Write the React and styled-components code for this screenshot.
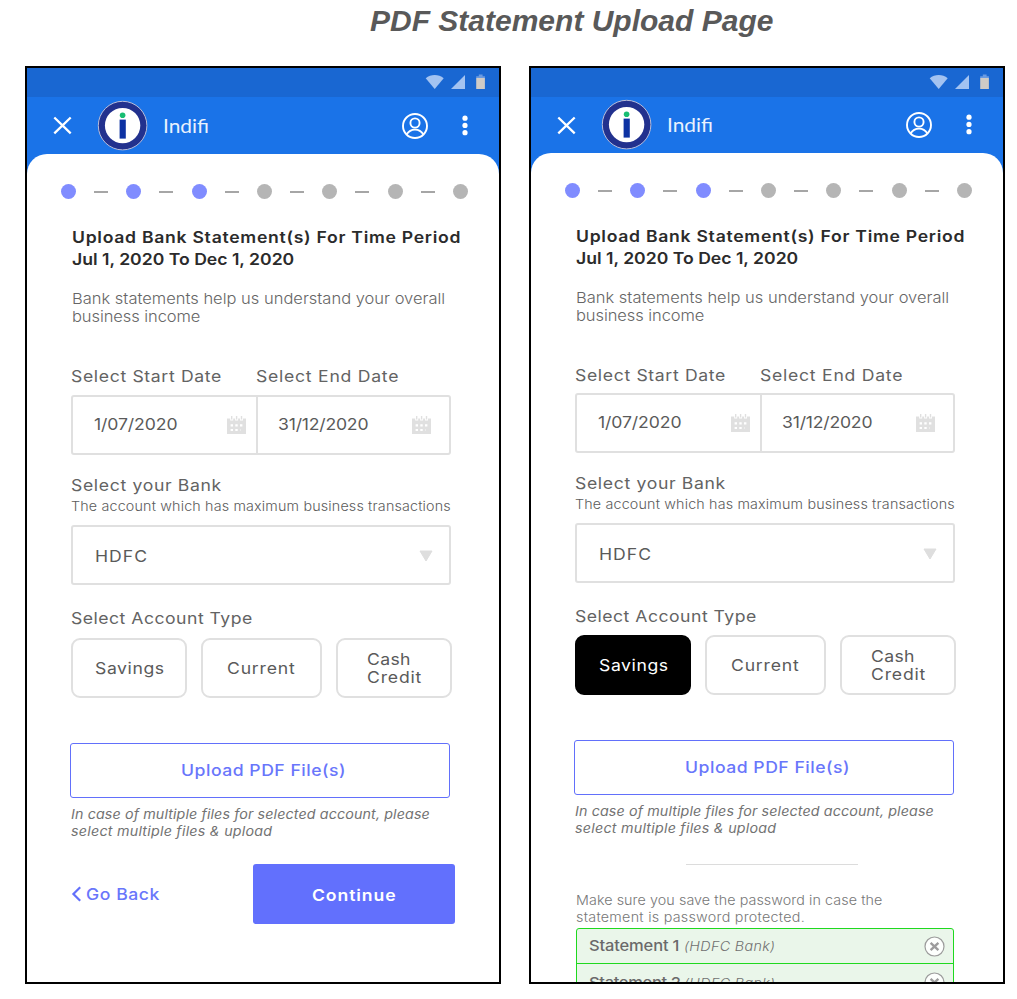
import React from 'react';
import styled, { createGlobalStyle } from 'styled-components';

const GlobalStyle = createGlobalStyle`
  * { box-sizing: border-box; }
  body { margin: 0; background: #fff; font-family: Inter, sans-serif; }
`;

const Page = styled.main`
  width: 1017px;
  height: 999px;
  overflow: hidden;
`;

const Title = styled.h1`
  margin: 0;
  padding: 4px 0 0 370px;
  height: 66px;
  font: italic bold 30px/34px "Liberation Sans", Arial, sans-serif;
  color: #595959;
`;

const Screens = styled.div`
  display: flex;
  gap: 28px;
  padding-left: 25px;
`;

const Phone = styled.section`
  display: flex;
  flex-direction: column;
  width: 476px;
  height: 918px;
  border: 2px solid #000;
  background: #1a73e8;
  overflow: hidden;
`;

const StatusBar = styled.div`
  display: flex;
  justify-content: flex-end;
  flex: none;
  height: 29px;
  padding: 6px 14px 0 0;
  background: #1967d2;
`;

const AppBar = styled.header`
  display: flex;
  align-items: center;
  flex: none;
  height: ${(p) => p.$height}px;
  padding: 0 31px 0 26px;
`;

const Logo = styled.svg`
  margin-left: 25px;
  flex: none;
`;

const Brand = styled.span`
  flex: 1;
  padding-left: 14px;
  font: 19px/24px Lato, sans-serif;
  color: #e9f1fd;
  transform: scaleX(1.1);
  transform-origin: 14px 50%;
`;

const Kebab = styled.svg`
  margin-left: 33px;
`;

const Sheet = styled.div`
  flex: 1;
  min-height: 0;
  padding: 30px 31px 0 34px;
  background: #fff;
  border-radius: 20px 20px 0 0;
`;

const Steps = styled.div`
  display: flex;
  justify-content: space-between;
  align-items: center;
  height: 15px;
`;

const Dot = styled.i`
  width: 15px;
  height: 15px;
  border-radius: 50%;
  background: ${(p) => (p.$done ? '#808cff' : '#b5b5b5')};
`;

const Dash = styled.i`
  width: 14px;
  height: 2px;
  background: #a6a6a6;
`;

const Form = styled.div`
  width: 381px;
  margin-left: 10px;
`;

/* Extended setting of the typeface: glyphs are widened, tracking is per string */
const Wide = styled.span`
  display: block;
  width: max-content;
  white-space: nowrap;
  letter-spacing: ${(p) => p.$track || 0}px;
  transform: scaleX(1.1);
  transform-origin: 0 50%;
`;

const Heading = styled.h2`
  margin: 27px 0 0 1px;
  font-size: 16px;
  line-height: 22px;
  font-weight: 600;
  color: #2b2b2b;
`;

const Intro = styled.div`
  margin: 20px 0 0 1px;
  font-size: 15px;
  line-height: 18px;
  font-weight: 300;
  color: #666;
`;

const Label = styled.div`
  margin-top: ${(p) => p.$top || 0}px;
  font-size: 16px;
  line-height: 20px;
  color: #636363;
`;

const DateLabels = styled.div`
  display: grid;
  grid-template-columns: 185px 1fr;
  margin-top: 40px;
`;

const Field = styled.div`
  display: flex;
  width: 380px;
  height: 60px;
  margin-top: ${(p) => p.$top}px;
  border: 2px solid #e0e0e0;
  border-radius: 3px;
  font-size: 16px;
  line-height: 20px;
  color: #5a5a5a;
`;

const DateCell = styled.div`
  display: flex;
  justify-content: space-between;
  flex: ${(p) => (p.$last ? '1' : '0 0 185px')};
  padding: 17px ${(p) => (p.$last ? 18 : 10)}px 0 ${(p) => (p.$last ? 20 : 20.5)}px;
  border-right: ${(p) => (p.$last ? 0 : 2)}px solid #e0e0e0;
`;

const CalendarSvg = styled.svg`
  margin-top: 2px;
`;

const BankCell = styled.div`
  display: flex;
  align-items: center;
  justify-content: space-between;
  flex: 1;
  padding: 1px 16px 0 22px;
`;

const Hint = styled.div`
  margin-top: 3px;
  font-size: 13px;
  line-height: 17px;
  font-weight: 300;
  color: #5c5c5c;
`;

const Types = styled.div`
  display: grid;
  grid-template-columns: 116px 120.5px 116.5px;
  gap: 14px;
  margin-top: ${(p) => p.$top}px;
`;

const TypeButton = styled.button`
  display: flex;
  flex-direction: column;
  justify-content: center;
  height: 60px;
  padding: 0 0 0 ${(p) => p.$indent}px;
  border: 2px solid ${(p) => (p.$active ? '#000' : '#e0e0e0')};
  border-radius: 9px;
  background: ${(p) => (p.$active ? '#000' : '#fff')};
  color: ${(p) => (p.$active ? '#fff' : '#5a5a5a')};
  font: 16px/18px Inter, sans-serif;
`;

const UploadButton = styled.button`
  display: flex;
  align-items: center;
  width: 380px;
  height: 55px;
  margin: 45px 0 0 -1px;
  padding: 0 0 1px 110px;
  border: 1px solid #6270fb;
  border-radius: 3px;
  background: #fff;
  color: #6976fb;
  font: 500 16px/20px Inter, sans-serif;
`;

const Note = styled.div`
  margin-top: 8px;
  font-size: 13px;
  line-height: 17px;
  font-style: italic;
  color: #737373;
`;

const Actions = styled.div`
  display: flex;
  width: 384px;
  justify-content: space-between;
  align-items: center;
  margin-top: 24px;
`;

const BackLink = styled.a`
  display: flex;
  align-items: center;
  gap: 4px;
  color: #6976fb;
  font-size: 16px;
  line-height: 20px;
  font-weight: 500;
`;

const ContinueButton = styled.button`
  width: 202px;
  height: 60px;
  padding: 2px 0 0 59px;
  border: 0;
  border-radius: 3px;
  background: #6270fd;
  color: #fff;
  font: 600 16px/20px Inter, sans-serif;
`;

const Divider = styled.hr`
  width: 172px;
  height: 1px;
  margin: 27px 0 0 111px;
  border: 0;
  background: #dcdcdc;
`;

const PasswordNote = styled.div`
  margin: 27px 0 0 1px;
  font-size: 13px;
  line-height: 17px;
  font-weight: 300;
  color: #777;
`;

const Files = styled.div`
  width: 378px;
  margin: 2px 0 0 1px;
  border: 1px solid #1fd91f;
  border-radius: 3px;
  background: #eaf6ea;
`;

const FileRow = styled.div`
  display: flex;
  align-items: center;
  height: 37px;
  padding: 0 8px 0 12px;

  &:first-child {
    height: 35px;
    border-bottom: 1px solid #1fd91f;
  }
`;

const FileName = styled.span`
  width: 95px;
  font-size: 15px;
  line-height: 20px;
  font-weight: 500;
  color: #6a6a6a;
`;

const FileBank = styled.span`
  flex: 1;
  font-size: 13px;
  line-height: 20px;
  font-style: italic;
  font-weight: 300;
  color: #707070;
`;

const StatusIcons = () => (
  <svg width="60" height="16" viewBox="425 74 60 16">
    <path d="M425.7 78.2C430.8 74 438.6 74 443.7 78.2L434.7 89Z" fill="#a3c3f1" />
    <path d="M451 89L465 75V89Z" fill="#a3c3f1" />
    <path d="M476.2 78V76.2H478.8V74.6H482.6V76.2H484.9V78Z" fill="#6a9be2" />
    <path d="M476.2 78H484.9V89H476.2Z" fill="#cfcbc6" />
  </svg>
);

const CloseIcon = () => (
  <svg width="19" height="19" viewBox="0 0 19 19" fill="none" stroke="#fff" strokeWidth="2.3">
    <path d="M1.3 1.5L17.7 17.3M17.7 1.5L1.3 17.3" />
  </svg>
);

const IndifiLogo = () => (
  <Logo width="52" height="52" viewBox="0 0 52 52">
    <circle cx="25.6" cy="25.6" r="24.3" fill="#22318e" stroke="#b9bcd8" strokeWidth="1" />
    <circle cx="25.6" cy="25.6" r="17.7" fill="#fff" />
    <circle cx="25.6" cy="15.2" r="2.8" fill="#18bd72" />
    <path d="M22.6 19.6H28.8V38.6H22.6Z" fill="#0d32a3" />
  </Logo>
);

const ProfileIcon = () => (
  <svg width="28" height="28" viewBox="0 0 28 28" fill="none" stroke="#fff" strokeWidth="1.9">
    <circle cx="14" cy="14" r="12" />
    <circle cx="14" cy="11" r="4.6" />
    <path d="M5.6 22.6C7.6 19.2 10.6 17.6 14 17.6S20.4 19.2 22.4 22.6" />
  </svg>
);

const KebabIcon = () => (
  <Kebab width="6" height="22" viewBox="0 0 6 22" fill="#fff">
    <circle cx="3" cy="3.2" r="2.6" />
    <circle cx="3" cy="10.4" r="2.6" />
    <circle cx="3" cy="17.7" r="2.6" />
  </Kebab>
);

const CalendarIcon = () => (
  <CalendarSvg width="19" height="18" viewBox="0 0 19 18">
    <path d="M0 2.5H19V18H0Z" fill="#e0e0e0" />
    <path d="M4.7 0V4.4M9.6 0V4.4M14.5 0V4.4" stroke="#fff" strokeWidth="3" />
    <path d="M4.7 0V3.6M9.6 0V3.6M14.5 0V3.6" stroke="#e0e0e0" strokeWidth="1.4" />
    <path d="M3.6 9.3H15.4M3.6 14H13.4" stroke="#fff" strokeWidth="2.2" strokeDasharray="2.4 2.3" />
  </CalendarSvg>
);

const ArrowIcon = () => (
  <svg width="14" height="12" viewBox="0 0 14 12">
    <path d="M1 1H13L7 11Z" fill="#dedede" stroke="#dedede" strokeLinejoin="round" />
  </svg>
);

const BackIcon = () => (
  <svg width="11" height="16" viewBox="0 0 11 16" fill="none" stroke="#6270fb" strokeWidth="2.2">
    <path d="M9.2 1.2L2.4 8L9.2 14.8" />
  </svg>
);

const RemoveIcon = () => (
  <svg width="21" height="21" viewBox="0 0 21 21" fill="none" stroke="#9c9c9c">
    <circle cx="10.5" cy="10.5" r="9.5" fill="#fdfffd" strokeWidth="1.2" />
    <path d="M6.6 6.9L14.4 14.1M14.4 6.9L6.6 14.1" strokeWidth="2.4" />
  </svg>
);

const Progress = () => (
  <Steps>
    {[0, 1, 2, 3, 4, 5, 6].map((n) => (
      <React.Fragment key={n}>
        {n > 0 && <Dash />}
        <Dot $done={n < 3} />
      </React.Fragment>
    ))}
  </Steps>
);

const StatementFile = ({ name, track }) => (
  <FileRow>
    <FileName><Wide $track={track}>{name}</Wide></FileName>
    <FileBank><Wide $track={0.32}>(HDFC Bank)</Wide></FileBank>
    <RemoveIcon />
  </FileRow>
);

function UploadScreen({ barHeight, fieldTop, typesTop, savings, children }) {
  return (
    <Phone>
      <StatusBar><StatusIcons /></StatusBar>
      <AppBar $height={barHeight}>
        <CloseIcon />
        <IndifiLogo />
        <Brand>Indifi</Brand>
        <ProfileIcon />
        <KebabIcon />
      </AppBar>
      <Sheet>
        <Progress />
        <Form>
          <Heading>
            <Wide $track={0.65}>Upload Bank Statement(s) For Time Period</Wide>
            <Wide>Jul 1, 2020 To Dec 1, 2020</Wide>
          </Heading>
          <Intro>
            <Wide>Bank statements help us understand your overall</Wide>
            <Wide $track={-0.07}>business income</Wide>
          </Intro>
          <DateLabels>
            <Label><Wide $track={0.59}>Select Start Date</Wide></Label>
            <Label><Wide $track={0.68}>Select End Date</Wide></Label>
          </DateLabels>
          <Field $top={fieldTop}>
            <DateCell>
              <Wide $track={-0.08}>1/07/2020</Wide>
              <CalendarIcon />
            </DateCell>
            <DateCell $last>
              <Wide $track={-0.18}>31/12/2020</Wide>
              <CalendarIcon />
            </DateCell>
          </Field>
          <Label $top={20}><Wide $track={0.6}>Select your Bank</Wide></Label>
          <Hint><Wide $track={0.15}>The account which has maximum business transactions</Wide></Hint>
          <Field $top={10}>
            <BankCell>
              <Wide $track={0.95}>HDFC</Wide>
              <ArrowIcon />
            </BankCell>
          </Field>
          <Label $top={23}><Wide $track={0.45}>Select Account Type</Wide></Label>
          <Types $top={typesTop}>
            <TypeButton $indent={22} $active={savings}><Wide $track={0.53}>Savings</Wide></TypeButton>
            <TypeButton $indent={24}><Wide $track={0.73}>Current</Wide></TypeButton>
            <TypeButton $indent={29}>
              <Wide $track={0.33}>Cash</Wide>
              <Wide $track={0.74}>Credit</Wide>
            </TypeButton>
          </Types>
          <UploadButton><Wide $track={0.47}>Upload PDF File(s)</Wide></UploadButton>
          <Note>
            <Wide $track={0.1}>In case of multiple files for selected account, please</Wide>
            <Wide $track={0.21}>select multiple files &amp; upload</Wide>
          </Note>
          {children}
        </Form>
      </Sheet>
    </Phone>
  );
}

export default function App() {
  return (
    <Page>
      <GlobalStyle />
      <Title>PDF Statement Upload Page</Title>
      <Screens>
        <UploadScreen barHeight={57} fieldTop={9} typesTop={10}>
          <Actions>
            <BackLink><BackIcon /><Wide $track={0.5}>Go Back</Wide></BackLink>
            <ContinueButton><Wide $track={0.82}>Continue</Wide></ContinueButton>
          </Actions>
        </UploadScreen>
        <UploadScreen barHeight={56} fieldTop={8} typesTop={9} savings>
          <Divider />
          <PasswordNote>
            <Wide $track={0.07}>Make sure you save the password in case the</Wide>
            <Wide $track={0.24}>statement is password protected.</Wide>
          </PasswordNote>
          <Files>
            <StatementFile name="Statement 1" track={-0.14} />
            <StatementFile name="Statement 2" track={-0.3} />
          </Files>
        </UploadScreen>
      </Screens>
    </Page>
  );
}
